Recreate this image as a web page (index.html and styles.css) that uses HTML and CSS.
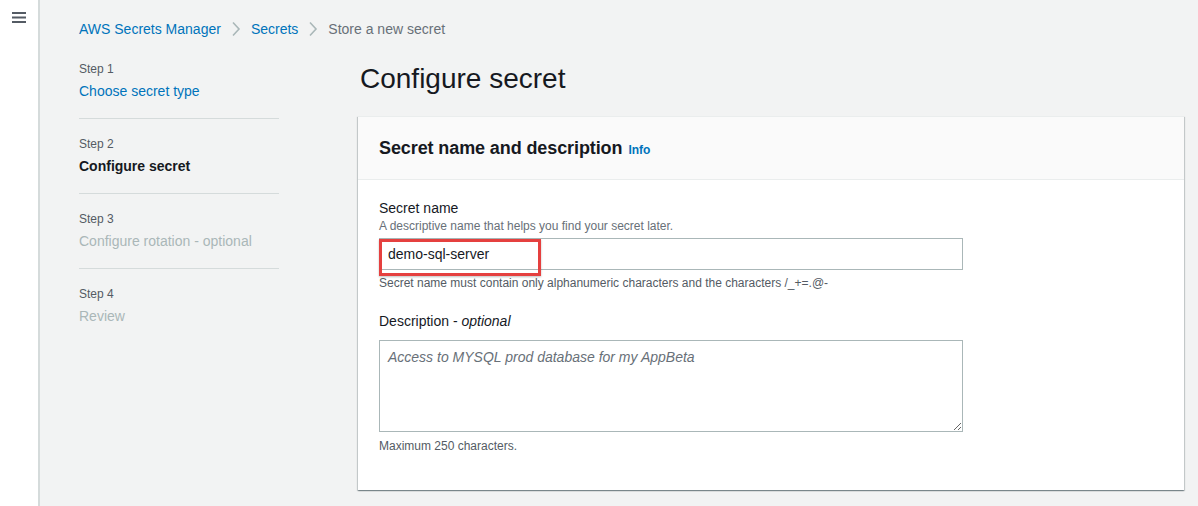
FILE: index.html
```html
<!DOCTYPE html>
<html lang="en">
<head>
<meta charset="utf-8">
<title>Store a new secret</title>
<link rel="stylesheet" href="styles.css">
</head>
<body>
<div class="app">
  <aside class="sidenav">
    <svg class="hamburger" width="16" height="14" viewBox="0 0 16 14"><rect x="0" y="1" width="14" height="2" fill="#545b64"/><rect x="0" y="5.5" width="14" height="2" fill="#545b64"/><rect x="0" y="10" width="14" height="2" fill="#545b64"/></svg>
  </aside>
  <main class="main">
    <nav class="breadcrumbs">
      <a class="crumb-link">AWS Secrets Manager</a>
      <svg class="sep" width="10" height="16" viewBox="0 0 10 16"><path d="M2 1.5 L8 8 L2 14.5" fill="none" stroke="#aab7b8" stroke-width="1.6"/></svg>
      <a class="crumb-link">Secrets</a>
      <svg class="sep" width="10" height="16" viewBox="0 0 10 16"><path d="M2 1.5 L8 8 L2 14.5" fill="none" stroke="#aab7b8" stroke-width="1.6"/></svg>
      <span class="crumb-current">Store a new secret</span>
    </nav>
    <div class="layout">
      <ol class="steps">
        <li class="step">
          <div class="step-num">Step 1</div>
          <div class="step-title link">Choose secret type</div>
        </li>
        <li class="step">
          <div class="step-num">Step 2</div>
          <div class="step-title current">Configure secret</div>
        </li>
        <li class="step">
          <div class="step-num">Step 3</div>
          <div class="step-title disabled">Configure rotation - optional</div>
        </li>
        <li class="step last">
          <div class="step-num">Step 4</div>
          <div class="step-title disabled">Review</div>
        </li>
      </ol>
      <section class="content">
        <h1 class="page-title">Configure secret</h1>
        <div class="panel">
          <div class="panel-header">
            <h2 class="panel-title">Secret name and description</h2>
            <a class="info">Info</a>
          </div>
          <div class="panel-body">
            <div class="field">
              <div class="label">Secret name</div>
              <div class="hint">A descriptive name that helps you find your secret later.</div>
              <div class="input-wrap">
                <div class="input">demo-sql-server</div>
                <div class="highlight"></div>
              </div>
              <div class="constraint">Secret name must contain only alphanumeric characters and the characters /_+=.@-</div>
            </div>
            <div class="field second">
              <div class="label">Description - <i>optional</i></div>
              <textarea class="textarea">Access to MYSQL prod database for my AppBeta</textarea>
              <div class="constraint">Maximum 250 characters.</div>
            </div>
          </div>
        </div>
      </section>
    </div>
  </main>
</div>
</body>
</html>
```

FILE: styles.css
```css
* { box-sizing: border-box; }
html, body { margin: 0; padding: 0; }
body {
  font-family: "Liberation Sans", Arial, sans-serif;
  background: #f2f3f3;
  color: #16191f;
  height: 506px;
  overflow: hidden;
}
.app { display: flex; min-height: 506px; }
.sidenav {
  width: 40px;
  flex: 0 0 40px;
  background: #fff;
  border-right: 2px solid #d5dbdb;
  min-height: 506px;
  padding: 11px 0 0 12px;
}
.hamburger { display: block; }
.main { flex: 1; padding: 19px 14px 0 39px; }
.breadcrumbs {
  display: flex;
  align-items: center;
  height: 20px;
  font-size: 14px;
  line-height: 20px;
}
.crumb-link { color: #0073bb; text-decoration: none; }
.crumb-current { color: #687078; }
.sep { margin: 0 10px 0 10px; display: block; }
.layout { display: flex; margin-top: 22px; }
.steps {
  list-style: none;
  margin: 0;
  padding: 0;
  width: 200px;
  flex: 0 0 200px;
  margin-right: 79px;
}
.step {
  padding-bottom: 17px;
  border-bottom: 1px solid #d5dbdb;
  margin-bottom: 17px;
}
.step.last { border-bottom: none; }
.step-num { font-size: 12px; line-height: 16px; color: #545b64; }
.step-title { font-size: 14px; line-height: 20px; margin-top: 4px; }
.step-title.link { color: #0073bb; }
.step-title.current { font-weight: bold; color: #16191f; }
.step-title.disabled { color: #aab7b8; }
.content { flex: 1; }
.page-title {
  margin: 0 0 19px 2px;
  font-size: 28px;
  line-height: 36px;
  font-weight: normal;
  color: #16191f;
}
.panel {
  background: #fff;
  border-top: 1px solid #eaeded;
  box-shadow: 0 1px 1px 0 rgba(0,28,36,.3), 1px 1px 1px 0 rgba(0,28,36,.15), -1px 1px 1px 0 rgba(0,28,36,.15);
}
.panel-header {
  background: #fafafa;
  border-bottom: 1px solid #eaeded;
  padding: 19px 20px 19px 21px;
  display: flex;
  align-items: baseline;
}
.panel-title {
  margin: 0;
  font-size: 18px;
  line-height: 24px;
  font-weight: bold;
  letter-spacing: -0.1px;
}
.info {
  font-size: 12px;
  font-weight: bold;
  color: #0073bb;
  margin-left: 6px;
}
.panel-body { padding: 18px 20px 36px 21px; }
.label { font-size: 14px; line-height: 20px; color: #16191f; }
.hint { font-size: 12px; line-height: 16px; color: #687078; margin-bottom: 4px; }
.input-wrap { position: relative; width: 584px; }
.input {
  height: 32px;
  border: 1px solid #aab7b8;
  background: #fff;
  padding: 0 8px;
  font-size: 14px;
  line-height: 30px;
  color: #16191f;
}
.highlight {
  position: absolute;
  left: 0;
  top: 1px;
  width: 162px;
  height: 37px;
  border: 3px solid #e5403f;
  box-shadow: 0 1px 2px rgba(0,0,0,.25);
}
.constraint { font-size: 12px; line-height: 16px; color: #545b64; margin-top: 5px; }
.field.second { margin-top: 20px; }
.field.second .label { margin-bottom: 9px; }
.textarea {
  display: block;
  width: 584px;
  height: 92px;
  border: 1px solid #aab7b8;
  border-radius: 0;
  padding: 6px 8px;
  font-family: "Liberation Sans", Arial, sans-serif;
  font-size: 14px;
  line-height: 20px;
  font-style: italic;
  color: #687078;
  resize: vertical;
  outline: none;
}
.field.second .constraint { margin-top: 6px; }
```
